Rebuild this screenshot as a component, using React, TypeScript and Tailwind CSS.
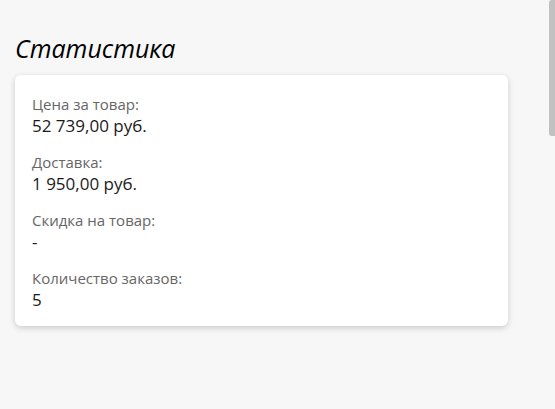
export default function App() {
  const rows = [
    { label: 'Цена за товар:', value: '52 739,00 руб.' },
    { label: 'Доставка:', value: '1 950,00 руб.' },
    { label: 'Скидка на товар:', value: '-' },
    { label: 'Количество заказов:', value: '5' },
  ]

  return (
    <div className="relative min-h-[409px] bg-[#f7f7f7] px-[15px] pt-[33px] font-['Open_Sans',sans-serif]">
      <h1 className="mb-[12px] text-[25px] leading-[30px] italic text-black">Статистика</h1>
      <div className="w-[493px] rounded-[6px] bg-white px-[17px] pt-[19px] pb-[14px] shadow-[0_2px_6px_rgba(0,0,0,0.18)]">
        <div className="flex flex-col gap-[14px]">
          {rows.map((r) => (
            <div key={r.label}>
              <div className="text-[15px] leading-[20px] text-[#666666]">{r.label}</div>
              <div className="text-[17px] leading-[24px] text-[#1a1a1a]">{r.value}</div>
            </div>
          ))}
        </div>
      </div>

      {/* scrollbar thumb peeking at the edge */}
      <div className="absolute top-0 right-0 h-[136px] w-[6px] rounded-l-[3px] bg-[#c1c1c1]"></div>
    </div>
  )
}
